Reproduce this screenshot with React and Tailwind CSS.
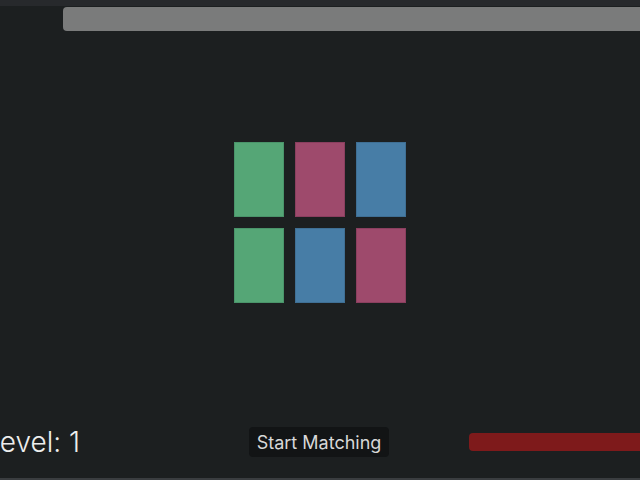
import React from 'react';

const cards = ['green', 'pink', 'blue', 'green', 'blue', 'pink'];

const colorClass = {
    green: 'bg-[#55a676] border-[#4a946a]',
    pink: 'bg-[#9e4a6c] border-[#8a3f5f]',
    blue: 'bg-[#477da6] border-[#3f6f94]',
};

export default function App() {
    return (
        <div className="w-[640px] h-[480px] overflow-hidden bg-[#1c1f20] flex flex-col" style={{ fontFamily: 'Inter, "Noto Sans", sans-serif' }}>
            {/* top strip + timer bar */}
            <div className="h-[6px] bg-[#27292c]" />
            <div className="pl-[63px] pt-[1px]">
                <div className="h-[24px] w-[620px] rounded-l-[4px] bg-[#7a7b7b]" />
            </div>

            {/* cards */}
            <div className="flex-1 flex justify-center pt-[111px]">
                <div className="grid grid-cols-3 gap-x-[11px] gap-y-[11px] h-fit">
                    {cards.map((c, i) => (
                        <div key={i} className={`w-[50px] h-[75px] border ${colorClass[c]}`} />
                    ))}
                </div>
            </div>

            {/* bottom bar */}
            <div className="flex items-center h-[30px] mb-[21px]">
                <span className="shrink-0 -ml-[16px] w-[265px] text-[28px] font-light text-[#eeeeee] leading-none">Level: 1</span>
                <button className="shrink-0 h-[30px] w-[140px] rounded-[4px] bg-[#121415] text-[18px] text-[#d8d8d8]">Start Matching</button>
                <div className="shrink-0 ml-[80px] h-[18px] w-[200px] rounded-l-[4px] bg-[#7e1a1b]" />
            </div>
            <div className="h-[2px] bg-[#3a3d40]" />
        </div>
    );
}
